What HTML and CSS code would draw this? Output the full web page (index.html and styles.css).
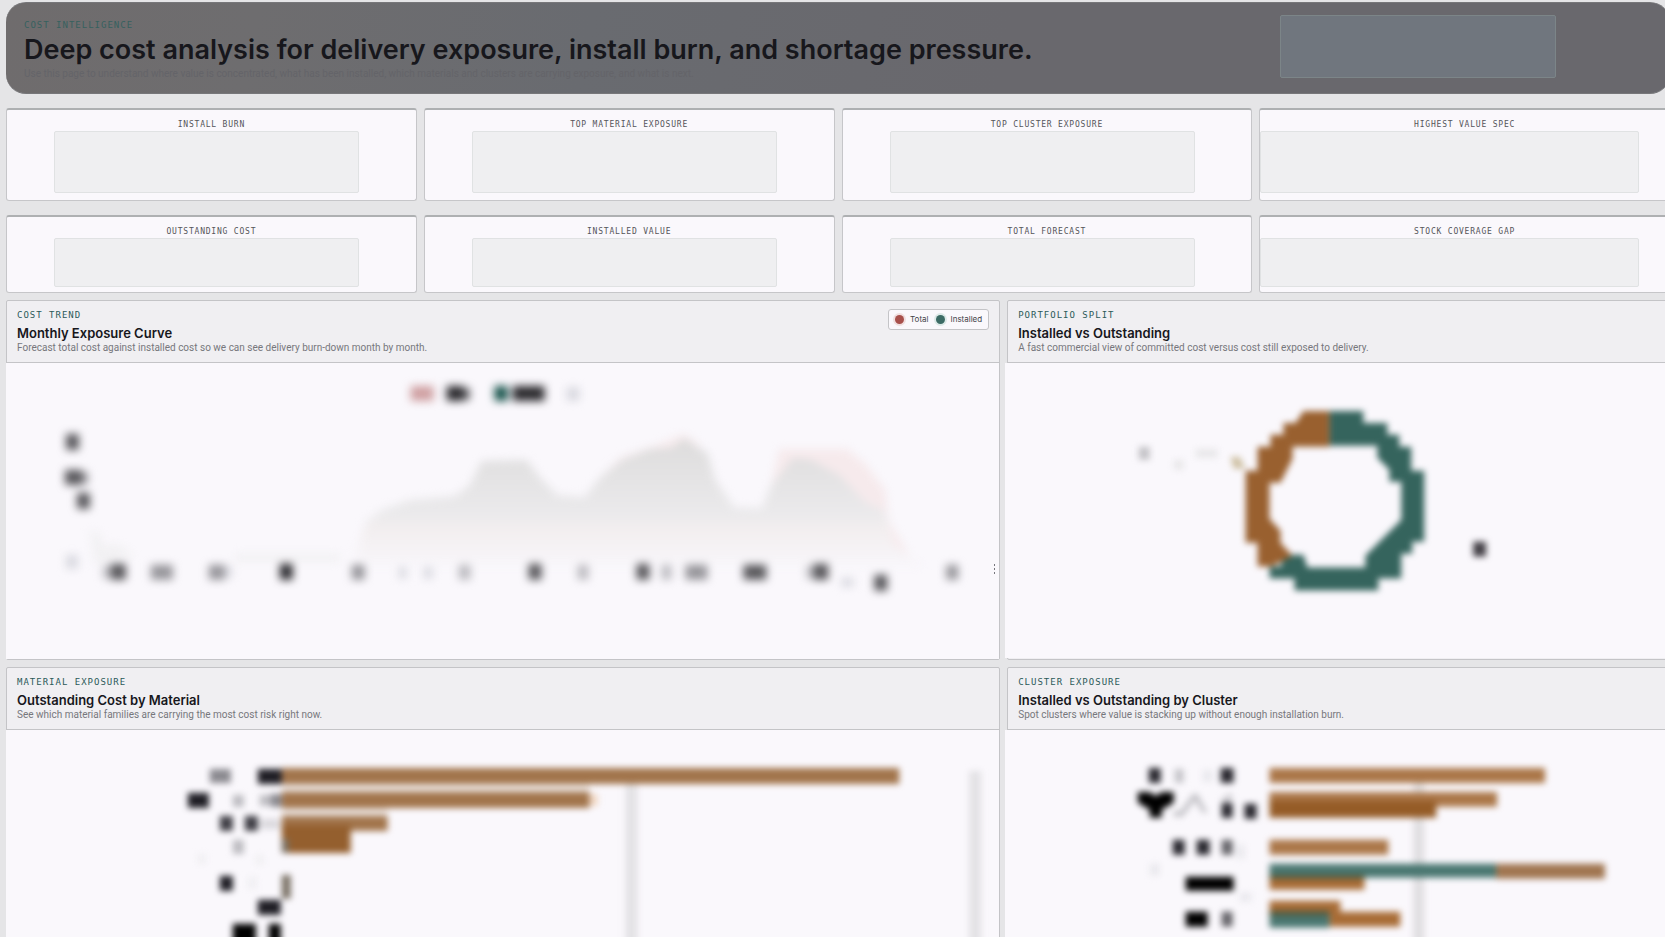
FILE: index.html
```
<!DOCTYPE html>
<html lang="en">
<head>
<meta charset="utf-8">
<title>Cost Intelligence</title>
<link rel="stylesheet" href="styles.css">
</head>
<body>
<main class="page">
  <header class="hero">
    <div class="hero-text">
      <p class="eyebrow hero-eyebrow">Cost Intelligence</p>
      <h1 class="hero-title">Deep cost analysis for delivery exposure, install burn, and shortage pressure.</h1>
      <p class="hero-desc">Use this page to understand where value is concentrated, what has been installed, which materials and clusters are carrying exposure, and what is next.</p>
    </div>
    <div class="hero-box"></div>
  </header>

  <section class="kpis">
    <article class="kpi"><h2 class="kpi-label">Install Burn</h2><div class="kpi-value"></div></article>
    <article class="kpi"><h2 class="kpi-label">Top Material Exposure</h2><div class="kpi-value"></div></article>
    <article class="kpi"><h2 class="kpi-label">Top Cluster Exposure</h2><div class="kpi-value"></div></article>
    <article class="kpi"><h2 class="kpi-label">Highest Value Spec</h2><div class="kpi-value kpi-value-wide"></div></article>
  </section>
  <section class="kpis kpis-short">
    <article class="kpi"><h2 class="kpi-label">Outstanding Cost</h2><div class="kpi-value"></div></article>
    <article class="kpi"><h2 class="kpi-label">Installed Value</h2><div class="kpi-value"></div></article>
    <article class="kpi"><h2 class="kpi-label">Total Forecast</h2><div class="kpi-value"></div></article>
    <article class="kpi"><h2 class="kpi-label">Stock Coverage Gap</h2><div class="kpi-value kpi-value-wide"></div></article>
  </section>

  <section class="panels">
    <article class="panel">
      <header class="panel-head">
        <div>
          <p class="eyebrow">Cost Trend</p>
          <h2 class="panel-title">Monthly Exposure Curve</h2>
          <p class="panel-desc">Forecast total cost against installed cost so we can see delivery burn-down month by month.</p>
        </div>
        <ul class="legend">
          <li><span class="dot dot-total"></span>Total</li>
          <li><span class="dot dot-installed"></span>Installed</li>
        </ul>
      </header>
      <div class="panel-body">
        <svg class="chart" viewBox="6 363 994 296" aria-hidden="true">
          <defs>
            <linearGradient id="area" x1="0" y1="0" x2="0" y2="1">
              <stop offset="0" stop-color="#dddcdc"/><stop offset="0.6" stop-color="#ebeaec"/><stop offset="0.7" stop-color="#f2eeef"/><stop offset="1" stop-color="#f8f6fa"/>
            </linearGradient>
            <filter id="soft" x="-50" y="300" width="1100" height="400" filterUnits="userSpaceOnUse" color-interpolation-filters="sRGB"><feGaussianBlur stdDeviation="4"/></filter>
          </defs>
          <g filter="url(#soft)">
            <path fill="#f6eaec" d="M772 485L780 449H848L866 464L886 490L889 520L910 556V562H772ZM600 478L622 457L660 444L684 434L700 444L690 470Z"/>
            <path fill="url(#area)" d="M352 566L362 535L366 522L382 510L410 500L455 496L470 485L482 461L527 460L541 478L558 495L585 497L600 478L622 460L650 449L672 448L685 438L698 447L708 453L716 480L735 507L762 508L772 485L794 458L812 460L840 475L866 502L886 512L894 545L925 566Z"/>
            <path fill="#f2f1f3" d="M90 530L100 534L104 546L118 544L134 556L110 564H94ZM235 554H340V562H235Z"/>
            <rect x="411" y="386" width="23" height="15" fill="#cfa0a2"/>
            <rect x="495" y="386" width="13" height="15" fill="#124f47"/>
            <g fill="#2b2a2e">
              <rect x="447" y="386" width="17" height="15"/><rect x="513" y="386" width="32" height="15"/><rect x="280" y="564" width="13" height="16"/>
            </g>
            <g fill="#59585c">
              <rect x="464" y="388" width="6" height="12"/><rect x="66" y="434" width="13" height="16"/><rect x="65" y="470" width="17" height="15"/><rect x="77" y="493" width="13" height="16"/>
              <rect x="111" y="564" width="15" height="16"/><rect x="529" y="564" width="13" height="16"/><rect x="637" y="564" width="13" height="16"/><rect x="744" y="565" width="23" height="15"/><rect x="814" y="564" width="15" height="16"/><rect x="875" y="575" width="13" height="16"/>
            </g>
            <g fill="#97969b">
              <rect x="82" y="472" width="6" height="12"/><rect x="151" y="565" width="22" height="15"/><rect x="209" y="565" width="16" height="15"/><rect x="352" y="565" width="13" height="15"/><rect x="686" y="565" width="22" height="15"/><rect x="947" y="565" width="12" height="15"/>
            </g>
            <g fill="#bdbcc1">
              <rect x="459" y="565" width="12" height="15"/><rect x="578" y="565" width="11" height="15"/><rect x="662" y="565" width="10" height="15"/><rect x="103" y="566" width="8" height="13"/><rect x="807" y="566" width="7" height="13"/>
            </g>
            <g fill="#dadae1">
              <rect x="567" y="387" width="13" height="14"/><rect x="66" y="555" width="12" height="14"/><rect x="225" y="566" width="7" height="12"/><rect x="399" y="567" width="8" height="12"/><rect x="424" y="567" width="9" height="12"/><rect x="842" y="578" width="12" height="9"/>
            </g>
          </g>
        </svg>
        <button class="more" type="button" aria-label="Chart options">
          <svg width="3" height="10" viewBox="0 0 3 10" aria-hidden="true"><path fill="#77767c" d="M1 0h1v2H1zM1 4h1v2H1zM1 8h1v2H1z"/></svg>
        </button>
      </div>
    </article>

    <article class="panel panel-side">
      <header class="panel-head">
        <div>
          <p class="eyebrow">Portfolio Split</p>
          <h2 class="panel-title">Installed vs Outstanding</h2>
          <p class="panel-desc">A fast commercial view of committed cost versus cost still exposed to delivery.</p>
        </div>
      </header>
      <div class="panel-body">
        <svg class="chart" viewBox="1005 363 665 296" aria-hidden="true">
          <defs><filter id="soft2" x="1000" y="300" width="700" height="400" filterUnits="userSpaceOnUse" color-interpolation-filters="sRGB"><feGaussianBlur stdDeviation="3"/></filter></defs>
          <g filter="url(#soft2)">
            <path fill="#35645d" d="M1330 411H1364V423H1388V435H1400V447H1412V471H1425V542H1413V554H1402V579H1379V591H1295V579H1270V567H1282V555H1304L1308 568H1366V556L1378 544L1390 532L1402 520V482H1390V470L1378 458V446H1330Z"/>
            <path fill="#99602f" d="M1330 411H1304L1296 423H1284V435H1271V447H1258V471H1246V543H1258V567H1272L1293 556L1281 543V531L1270 519V483H1281L1293 459V447H1330Z"/>
            <rect x="1474" y="542" width="13" height="15" fill="#444147"/>
            <rect x="1139" y="447" width="11" height="13" fill="#c4c3c7"/>
            <g fill="#e9e8ea"><rect x="1174" y="460" width="10" height="10"/><rect x="1196" y="449" width="22" height="9"/></g>
            <path fill="#cfc1a4" d="M1231 457H1240L1246 469H1234Z"/>
          </g>
        </svg>
      </div>
    </article>

    <article class="panel">
      <header class="panel-head">
        <div>
          <p class="eyebrow">Material Exposure</p>
          <h2 class="panel-title">Outstanding Cost by Material</h2>
          <p class="panel-desc">See which material families are carrying the most cost risk right now.</p>
        </div>
      </header>
      <div class="panel-body">
        <svg class="chart" viewBox="6 731 994 296" aria-hidden="true">
          <defs><filter id="soft3" x="-50" y="700" width="1100" height="400" filterUnits="userSpaceOnUse" color-interpolation-filters="sRGB"><feGaussianBlur stdDeviation="3"/></filter></defs>
          <g filter="url(#soft3)">
            <path fill="#e3e2e5" d="M626 784H638V1040H626ZM970 772H982V1040H970Z"/>
            <path fill="#e8dfda" d="M282 782H590V796H282ZM282 806H388V820H282Z"/>
            <path fill="#a2754c" d="M282 769H900V785H282ZM282 793H590V809H282ZM282 817H388V832H282Z"/>
            <path fill="#945f2e" d="M282 826H351V854H282Z"/>
            <path fill="#f0d5bf" d="M591 795H598V807H591Z"/>
            <path fill="#7b7266" d="M282 840H289V854H282ZM282 876H291V900H282Z"/>
            <g fill="#1f1e25">
              <rect x="258" y="770" width="24" height="15"/><rect x="188" y="794" width="21" height="15"/><rect x="258" y="901" width="23" height="15"/><rect x="220" y="877" width="13" height="15"/>
            </g>
            <g fill="#000"><rect x="233" y="925" width="23" height="30"/><rect x="269" y="925" width="12" height="30"/></g>
            <g fill="#403f46"><rect x="220" y="817" width="13" height="15"/><rect x="245" y="817" width="13" height="15"/></g>
            <g fill="#8b8a90"><rect x="210" y="770" width="21" height="14"/><rect x="271" y="795" width="11" height="13"/></g>
            <g fill="#bdbcc1"><rect x="233" y="796" width="11" height="12"/><rect x="233" y="841" width="11" height="14"/><rect x="260" y="796" width="11" height="11"/><rect x="260" y="820" width="20" height="10" opacity=".5"/></g>
            <g fill="#f0eff2"><rect x="198" y="855" width="8" height="10"/><rect x="256" y="856" width="8" height="10"/><rect x="248" y="878" width="9" height="12"/></g>
          </g>
        </svg>
      </div>
    </article>

    <article class="panel panel-side">
      <header class="panel-head">
        <div>
          <p class="eyebrow">Cluster Exposure</p>
          <h2 class="panel-title">Installed vs Outstanding by Cluster</h2>
          <p class="panel-desc">Spot clusters where value is stacking up without enough installation burn.</p>
        </div>
      </header>
      <div class="panel-body">
        <svg class="chart" viewBox="1005 731 665 296" aria-hidden="true">
          <defs><filter id="soft4" x="1000" y="700" width="700" height="400" filterUnits="userSpaceOnUse" color-interpolation-filters="sRGB"><feGaussianBlur stdDeviation="3"/></filter></defs>
          <g filter="url(#soft4)">
            <path fill="#e0dee1" d="M1414 784H1425V1040H1414Z"/>
            <path fill="#ab7749" d="M1270 769H1546V784H1270ZM1270 793H1498V808H1270ZM1270 841H1389V856H1270Z"/>
            <path fill="#955c27" d="M1270 802H1437V819H1270Z"/>
            <path fill="#a86c36" d="M1270 878H1365V891H1270ZM1270 902H1341V916H1270ZM1330 913H1401V928H1330Z"/>
            <path fill="#a07550" d="M1497 865H1606V880H1497Z"/>
            <path fill="#4a7771" d="M1270 865H1497V879H1270ZM1270 916H1330V929H1270Z"/>
            <path fill="#505a40" d="M1270 876H1365V880H1270ZM1270 912H1330V917H1270Z"/>
            <g fill="#2a2930">
              <rect x="1149" y="769" width="12" height="15"/><rect x="1221" y="769" width="13" height="15"/><rect x="1245" y="805" width="12" height="15"/><rect x="1173" y="841" width="12" height="15"/><rect x="1197" y="841" width="13" height="15"/><rect x="1222" y="804" width="11" height="15"/>
            </g>
            <path fill="#000" d="M1138 793H1150L1156 797L1162 793H1174V804L1162 811V819H1150V811L1138 804ZM1186 878H1234V892H1186ZM1186 913H1208V928H1186Z"/>
            <g fill="#66656a"><rect x="1222" y="841" width="11" height="15"/><rect x="1222" y="913" width="11" height="15"/></g>
            <g fill="#c6c5ca"><rect x="1175" y="770" width="9" height="14"/><path d="M1174 812L1181 812L1193 795H1198L1208 814H1203L1195 802L1183 818H1174ZM1222 800L1232 794V802H1222Z"/></g>
            <g fill="#eae9ee"><rect x="1150" y="865" width="10" height="12"/><rect x="1203" y="771" width="10" height="12"/><rect x="1237" y="846" width="8" height="14"/><rect x="1240" y="894" width="12" height="9"/></g>
          </g>
        </svg>
      </div>
    </article>
  </section>
</main>
</body>
</html>
```
FILE: styles.css
```
* { box-sizing: border-box; }
body {
  margin: 0;
  height: 100vh;
  overflow: hidden;
  background: #e5e5e7;
  font-family: Inter, "Liberation Sans", sans-serif;
  color: #17171c;
}
h1, h2, p, ul { margin: 0; padding: 0; }

/* The board runs a few pixels past the right edge of the window. */
.page {
  margin: 0 -5px 0 6px;
  padding-top: 2px;
}

.eyebrow {
  font: 9px/12px "DejaVu Sans Mono", monospace;
  letter-spacing: 1px;
  text-transform: uppercase;
  color: #2b5a59;
}

.hero {
  display: flex;
  justify-content: space-between;
  align-items: flex-start;
  padding: 12px 114px 13px 18px;
  border: 1px solid #77777a;
  border-width: 1px 0;
  border-radius: 20px;
  background: linear-gradient(100deg, #6f6c6d 0%, #6e6d6f 15%, #696b70 35%, #69686d 60%, #69686d 100%);
}
.hero-text { padding-top: 4px; white-space: nowrap; }
.hero-eyebrow { color: #36615f; }
.hero-title {
  margin-top: 2px;
  font-size: 27px;
  line-height: 34px;
  font-weight: 600;
}
.hero-desc {
  font: 10px/13px Roboto, sans-serif;
  color: #646469;
}
.hero-box {
  flex: none;
  width: 276px;
  height: 63px;
  border: 1px solid #7c8588;
  border-radius: 2px;
  background: #70767e;
}

.kpis {
  display: grid;
  grid-template-columns: repeat(4, minmax(0, 1fr));
  gap: 7px;
  margin-top: 14px;
}
.kpi {
  padding: 8px 0 7px;
  border: 1px solid #c6c6c9;
  border-top: 2px solid #aeb0b2;
  border-radius: 3px;
  background: #faf8fc;
}
.kpi-label {
  font: 8px/13px "DejaVu Sans Mono", monospace;
  letter-spacing: 0.1em;
  text-align: center;
  text-transform: uppercase;
  color: #55555a;
}
.kpi-value {
  width: 305px;
  height: 62px;
  margin-left: 47px;
  border: 1px solid #e0e2e3;
  border-radius: 2px;
  background: #efeff1;
}
.kpi-value-wide { width: 379px; margin-left: 0; }
.kpis-short .kpi { padding-bottom: 5px; }
.kpis-short .kpi-value { height: 49px; }

.panels {
  display: grid;
  grid-template-columns: minmax(0, 3fr) minmax(0, 2fr);
  gap: 7px;
  margin-top: 7px;
}
.panel {
  border: 1px solid #c4c4c7;
  border-radius: 2px;
  background: #f0eff2;
}
.panel-head {
  display: flex;
  justify-content: space-between;
  align-items: flex-start;
  padding: 8px 10px;
  border-bottom: 1px solid #c4c4c7;
}
.panel-title {
  margin-top: 3px;
  font-size: 13px;
  line-height: 18px;
  font-weight: 600;
}
.panel-desc {
  font: 10px/12px Roboto, sans-serif;
  color: #77777c;
}
.panel-body {
  position: relative;
  margin-left: -1px;
  background: #faf8fc;
}
.panel-side .panel-body { margin-left: -3px; }
.chart { display: block; width: 100%; height: auto; }

.legend {
  display: flex;
  gap: 7px;
  padding: 0 6px;
  border: 1px solid #c4c4c7;
  border-radius: 3px;
  background: #faf8fc;
  list-style: none;
  font-size: 8px;
  line-height: 19px;
  color: #44444a;
}
.legend li { display: flex; align-items: center; gap: 6px; }
.dot { width: 9px; height: 9px; border-radius: 50%; }
.dot-total { background: #a8504c; box-shadow: 0 0 0 2px #f0dfe0; }
.dot-installed { background: #3c6b65; box-shadow: 0 0 0 2px #dde9e8; }

.more {
  position: absolute;
  right: 0;
  top: 201px;
  display: flex;
  padding: 0 3px;
  border: 0;
  background: none;
}
```
